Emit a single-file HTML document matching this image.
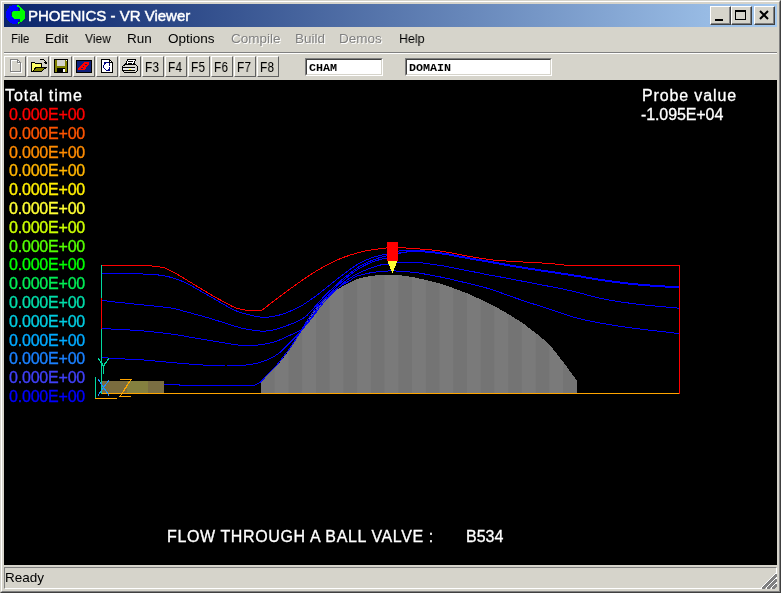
<!DOCTYPE html>
<html>
<head>
<meta charset="utf-8">
<title>PHOENICS - VR Viewer</title>
<style>
html,body{margin:0;padding:0;}
body{width:781px;height:593px;overflow:hidden;background:#d6d4cb;font-family:"Liberation Sans",sans-serif;position:relative;}
.abs{position:absolute;}
#frame{position:absolute;left:0;top:0;width:781px;height:593px;box-sizing:border-box;
  border-top:1px solid #d6d4cb;border-left:1px solid #d6d4cb;border-right:1px solid #404040;border-bottom:1px solid #404040;}
#frame2{position:absolute;left:1px;top:1px;width:779px;height:591px;box-sizing:border-box;
  border-top:1px solid #fff;border-left:1px solid #fff;border-right:1px solid #808080;border-bottom:1px solid #808080;}
#title{position:absolute;left:4px;top:4px;width:773px;height:23px;background:linear-gradient(to right,#0a246a 0%,#a6caf0 100%);}
#ttext{position:absolute;left:28px;top:7px;-webkit-text-stroke:0.45px #fff;color:#fff;font-size:15px;line-height:18px;white-space:nowrap;letter-spacing:0px;}
.tbtn{position:absolute;top:6px;height:19px;width:21px;box-sizing:border-box;background:#d6d4cb;
  border-top:1px solid #fff;border-left:1px solid #fff;border-right:1px solid #404040;border-bottom:1px solid #404040;}
.tbtn:after{content:"";position:absolute;left:0;top:0;right:0;bottom:0;border-right:1px solid #808080;border-bottom:1px solid #808080;}
.menu{position:absolute;top:30px;font-size:13.5px;line-height:18px;color:#000;white-space:nowrap;}
.menu.dis{color:#808080;text-shadow:1px 1px 0 #fff;}
.menu{transform-origin:0 0;will-change:transform;}
#ttext,#ready,.inp span{will-change:transform;}
#sep1{position:absolute;left:4px;top:52px;width:773px;height:1px;background:#808080;}
#sep2{position:absolute;left:4px;top:53px;width:773px;height:1px;background:#fff;}
.tb{position:absolute;top:56px;width:22px;height:21px;box-sizing:border-box;background:#d6d4cb;
  border-top:1px solid #fff;border-left:1px solid #fff;border-right:1px solid #606060;border-bottom:1px solid #606060;}
.tb span{position:absolute;left:-1.3px;top:2px;font-size:14px;line-height:16px;width:20px;text-align:center;color:#000;transform:scaleX(0.84);will-change:transform;}
.inp{position:absolute;top:58px;height:18px;box-sizing:border-box;background:#fff;
  border-top:1px solid #808080;border-left:1px solid #808080;border-right:1px solid #fff;border-bottom:1px solid #fff;}
.inp:after{content:"";position:absolute;left:0;top:0;right:0;bottom:0;border-top:1px solid #404040;border-left:1px solid #404040;border-right:1px solid #d6d4cb;border-bottom:1px solid #d6d4cb;}
.inp span{position:absolute;left:3px;top:3px;font-family:"Liberation Mono",monospace;font-weight:bold;font-size:11.7px;line-height:12px;color:#000;z-index:2;}
#canvas{position:absolute;left:4px;top:80px;width:773px;height:485px;background:#000;}
.leg{position:absolute;left:8.5px;font-size:16px;line-height:19px;white-space:nowrap;letter-spacing:-0.2px;-webkit-text-stroke:0.35px currentColor;will-change:transform;}
.wt{position:absolute;color:#fff;font-size:16px;line-height:19px;white-space:nowrap;-webkit-text-stroke:0.3px #fff;will-change:transform;}
#status{position:absolute;left:4px;top:567px;width:773px;height:22px;box-sizing:border-box;
  border-top:1px solid #808080;border-left:1px solid #808080;border-right:1px solid #fff;border-bottom:1px solid #fff;}
#ready{position:absolute;left:5.3px;top:569px;font-size:13.5px;line-height:18px;color:#000;}
</style>
</head>
<body>
<div id="frame"></div><div id="frame2"></div>
<div id="title"></div>
<svg id="icon" class="abs" style="left:0;top:0" width="32" height="30" viewBox="0 0 32 30" shape-rendering="crispEdges">
  <path d="M9.5,6.5 L13,5 L17,5 L18.5,6.5 L18.5,10.5 L14,11 L12,12.5 L12,17 L14,19 L19.5,19 L19.5,21 L17,24 L13,24 L9,22 L6.5,18 L6,15 L6,12 L7.5,8.5 Z" fill="#0000ff"/>
  <path d="M16.5,5 L19,5.5 L22.5,8.5 L25,12 L25,18 L21,22 L18.5,24 L17.5,24 L17.5,22.5 L19.5,21.5 L19.5,19 L14,19 L12,17 L12,12.5 L14,11 L19.5,10.5 L19.5,8 L17.5,7 Z" fill="#00ff00"/>
  <rect x="10.5" y="11" width="1.5" height="5" fill="#0a246a"/>
  <rect x="18" y="8" width="1.5" height="2.5" fill="#0a246a"/>
  <rect x="18" y="19.5" width="1.5" height="2" fill="#0a246a"/>
</svg>
<div id="ttext">PHOENICS - VR Viewer</div>
<div class="tbtn" style="left:710px"><svg class="abs" style="left:0;top:0" width="19" height="17"><rect x="4" y="12" width="8" height="2" fill="#000"/></svg></div>
<div class="tbtn" style="left:731px"><svg class="abs" style="left:0;top:0" width="19" height="17"><rect x="3.5" y="3.5" width="10" height="9" fill="none" stroke="#000"/><rect x="3" y="3" width="11" height="2" fill="#000"/></svg></div>
<div class="tbtn" style="left:754px"><svg class="abs" style="left:0;top:0" width="19" height="17"><path d="M5,4 L13,12 M13,4 L5,12" stroke="#000" stroke-width="2" fill="none"/></svg></div>

<div class="menu" id="m1" style="left:11px;transform:scaleX(0.84)">File</div>
<div class="menu" id="m2" style="left:45px">Edit</div>
<div class="menu" id="m3" style="left:85px;transform:scaleX(0.89)">View</div>
<div class="menu" id="m4" style="left:127px">Run</div>
<div class="menu" id="m5" style="left:168px">Options</div>
<div class="menu dis" id="m6" style="left:231px">Compile</div>
<div class="menu dis" id="m7" style="left:295px">Build</div>
<div class="menu dis" id="m8" style="left:339px">Demos</div>
<div class="menu" id="m9" style="left:398.5px;transform:scaleX(0.92)">Help</div>
<div id="sep1"></div><div id="sep2"></div>

<div class="tb" style="left:4px"></div>
<div class="tb" style="left:27px"></div>
<div class="tb" style="left:50px"></div>
<div class="tb" style="left:73px"></div>
<div class="tb" style="left:96px"></div>
<div class="tb" style="left:119px"></div>
<div class="tb" style="left:142px"><span>F3</span></div>
<div class="tb" style="left:165px"><span>F4</span></div>
<div class="tb" style="left:188px"><span>F5</span></div>
<div class="tb" style="left:211px"><span>F6</span></div>
<div class="tb" style="left:234px"><span>F7</span></div>
<div class="tb" style="left:257px"><span>F8</span></div>
<svg id="tbicons" class="abs" style="left:0;top:0" width="150" height="80" viewBox="0 0 150 80" shape-rendering="crispEdges" fill="none">
  <!-- new (disabled, embossed) -->
  <path d="M11.5,60.5 H18.5 L21.5,63.5 V72.5 H11.5 Z M18.5,60.5 V63.5 H21.5" stroke="#fff" stroke-width="1"/>
  <path d="M10.5,59.5 H17.5 L20.5,62.5 V71.5 H10.5 Z M17.5,59.5 V62.5 H20.5" stroke="#808080" stroke-width="1"/>
  <!-- open -->
  <path d="M32,63 H35 L36,64 H41 V67 H37 L33,71 H32 Z" fill="#ffff66"/>
  <path d="M31.5,71.5 V62.5 H34.5 L35.5,63.5 H41.5 V66.5" stroke="#000" stroke-width="1"/>
  <path d="M32.5,71.5 L36.5,67 H46.5 L41.5,71.5 Z" fill="#808000" stroke="#000" stroke-width="1"/>
  <path d="M39.5,60.5 L40.5,59.5 H43.5 L45.5,61.5 V63.5 M43.5,62.5 H46.5 M44.5,63.5 H46.5" stroke="#000" stroke-width="1"/>
  <!-- save -->
  <rect x="54" y="59" width="14" height="14" fill="#000"/>
  <rect x="55" y="60" width="2" height="12" fill="#808000"/>
  <rect x="65" y="60" width="2" height="12" fill="#808000"/>
  <rect x="55" y="66" width="12" height="2" fill="#808000"/>
  <rect x="57" y="60" width="8" height="6" fill="#d6d4cb"/>
  <rect x="63" y="69" width="2" height="3" fill="#fff"/>
  <rect x="66" y="60" width="1" height="1" fill="#fff"/>
  <!-- red box on navy -->
  <rect x="76" y="60" width="16" height="13" fill="#000"/>
  <rect x="77" y="61" width="14" height="11" fill="#10207a"/>
  <path d="M78,68 L84,62.5 L89,62 L89,64.5 L84,70.5 L78.5,70 Z" fill="#ff0000"/>
  <rect x="81" y="68" width="2" height="1" fill="#10207a"/><rect x="85" y="64" width="2" height="1" fill="#10207a"/><rect x="83" y="66" width="1" height="1" fill="#10207a"/>
  <!-- refresh page -->
  <path d="M101.5,59.5 H109.5 L112.5,62.5 V72.5 H101.5 Z" fill="#fff" stroke="#000" stroke-width="1"/>
  <path d="M109.5,59.5 V62.5 H112.5" stroke="#000" stroke-width="1"/>
  <rect x="104" y="62" width="5" height="1" fill="#000080"/><rect x="104" y="63" width="2" height="1" fill="#000080"/><rect x="109" y="63" width="1" height="1" fill="#000080"/><rect x="104" y="64" width="1" height="1" fill="#000080"/><rect x="109" y="64" width="1" height="2" fill="#000080"/><rect x="109" y="67" width="1" height="1" fill="#000080"/><rect x="103" y="65" width="1" height="3" fill="#000080"/><rect x="104" y="68" width="1" height="1" fill="#000080"/><rect x="105" y="69" width="1" height="1" fill="#000080"/><rect x="106" y="70" width="4" height="1" fill="#000080"/><rect x="108" y="69" width="2" height="1" fill="#000080"/><rect x="109" y="68" width="1" height="1" fill="#000080"/>
  <!-- printer -->
  <path d="M125.5,65 L127.5,59.5 H135.5 L133.5,65 Z" fill="#fff" stroke="#000" stroke-width="1"/>
  <path d="M128,61.5 H133 M127.5,63.5 H132" stroke="#000" stroke-width="1"/>
  <path d="M122.5,66.5 L125,64.5 H135.5 L137.5,66.5 V70.5 L135.5,72.5 H124.5 L122.5,70.5 Z" fill="#d6d4cb" stroke="#000" stroke-width="1"/>
  <path d="M123,67.5 H135 M123,70.5 H135" stroke="#000" stroke-width="1"/>
  <rect x="123" y="68" width="12" height="2" fill="#e8e8e8"/>
  <rect x="129" y="69" width="2" height="1" fill="#ffff00"/>
</svg>
<div class="inp" style="left:305px;width:78px"><span>CHAM</span></div>
<div class="inp" style="left:405px;width:147px"><span>DOMAIN</span></div>

<div id="canvas"></div>
<div class="wt" id="tt" style="left:5px;top:86px;letter-spacing:0.93px">Total time</div>
<div class="wt" id="pv" style="left:642px;top:86px;letter-spacing:0.87px">Probe value</div>
<div class="wt" id="pv2" style="left:641px;top:105px;letter-spacing:-0.1px">-1.095E+04</div>
<div class="wt" id="ftxt" style="left:167px;top:527px;letter-spacing:0.62px">FLOW THROUGH A BALL VALVE :</div>
<div class="wt" id="b534" style="left:466px;top:527px">B534</div>

<!--GEN-->
<div class="leg" id="l0" style="top:105px;color:#ff0000">0.000E+00</div>
<div class="leg" id="l1" style="top:124px;color:#ff5500">0.000E+00</div>
<div class="leg" id="l2" style="top:143px;color:#ff8c00">0.000E+00</div>
<div class="leg" id="l3" style="top:161px;color:#ffb400">0.000E+00</div>
<div class="leg" id="l4" style="top:180px;color:#ffee00">0.000E+00</div>
<div class="leg" id="l5" style="top:199px;color:#ffff33">0.000E+00</div>
<div class="leg" id="l6" style="top:218px;color:#ccff00">0.000E+00</div>
<div class="leg" id="l7" style="top:237px;color:#55ff00">0.000E+00</div>
<div class="leg" id="l8" style="top:255px;color:#00ff00">0.000E+00</div>
<div class="leg" id="l9" style="top:274px;color:#00ee55">0.000E+00</div>
<div class="leg" id="l10" style="top:293px;color:#00ddaa">0.000E+00</div>
<div class="leg" id="l11" style="top:312px;color:#00cce0">0.000E+00</div>
<div class="leg" id="l12" style="top:331px;color:#00aaff">0.000E+00</div>
<div class="leg" id="l13" style="top:349px;color:#1a80ff">0.000E+00</div>
<div class="leg" id="l14" style="top:368px;color:#4040f8">0.000E+00</div>
<div class="leg" id="l15" style="top:387px;color:#0000ff">0.000E+00</div>
<svg id="plot" class="abs" style="left:0;top:0" width="781" height="593" viewBox="0 0 781 593" shape-rendering="crispEdges" fill="none">
<defs><pattern id="stripes" patternUnits="userSpaceOnUse" x="261" y="0" width="27.46" height="8"><rect x="0" y="0" width="13.73" height="8" fill="#747474"/><rect x="13.73" y="0" width="13.73" height="8" fill="#7a7a7a"/></pattern></defs>
<path d="M261,393.5 L261,381 L268,374.5 L275.5,367.4 L282,359.5 L289,350.4 L296,340 L302.8,328.7 L309.5,318 L316.5,308.2 L323,301 L330,294.6 L337,289.7 L343.8,285.5 L350.5,282 L357.4,279 L364,277.2 L371,276 L378,275.2 L384.8,274.8 L392,274.7 L398.5,275 L412.2,277 L426,279.9 L439.7,283.5 L453.4,288.1 L467.2,293.3 L480.9,299.5 L494.6,306.2 L508.3,314 L522,322.6 L535.8,333 L549.5,344.5 L563.2,362 L577,380.7 L577,393.5 Z" fill="url(#stripes)"/>
<rect x="102" y="381" width="25" height="12" fill="#7a6c3e"/><rect x="127" y="381" width="21" height="12" fill="#84803f"/><rect x="148" y="381" width="16" height="12" fill="#7a6e42"/>
<path d="M101,393.5 L680,393.5" stroke="#ffa500" stroke-width="1.3"/>
<path d="M102,273.5 C107.2,273.5 125.0,273.3 133,273.5 C141.0,273.7 145.0,274.2 150,274.5 C155.0,274.8 159.2,274.9 163,275.5 C166.8,276.1 169.5,276.9 173,278 C176.5,279.1 180.0,280.2 184,282 C188.0,283.8 192.5,286.5 197,289 C201.5,291.5 205.5,293.8 211,297 C216.5,300.2 225.2,305.4 230,308 C234.8,310.6 235.8,310.9 240,312.3 C244.2,313.7 251.0,315.4 255,316.2 C259.0,317.0 261.2,317.3 264,317.4 C266.8,317.5 269.0,317.1 272,316.6 C275.0,316.1 278.9,315.3 281.9,314.4 C284.9,313.5 287.0,312.5 290,311.2 C293.0,309.9 296.8,308.3 299.8,306.7 C302.8,305.1 305.0,303.5 308,301.5 C311.0,299.5 314.7,296.9 317.7,294.7 C320.7,292.4 323.0,290.4 326,288 C329.0,285.6 332.6,282.7 335.6,280.3 C338.6,277.9 341.0,276.0 344,273.8 C347.0,271.6 350.6,268.9 353.6,266.9 C356.6,264.9 359.0,263.5 362,262 C365.0,260.5 368.5,259.0 371.5,257.9 C374.5,256.8 377.4,256.1 380,255.5 C382.6,254.8 384.3,254.7 387.3,254 C390.3,253.3 394.6,251.7 398,251.1 C401.4,250.5 405.0,250.6 408,250.5 C411.0,250.4 412.1,250.2 416,250.4 C419.9,250.6 426.4,251.1 431.5,251.6 C436.6,252.1 441.7,252.9 446.8,253.7 C451.9,254.5 456.9,255.6 462,256.5 C467.1,257.4 472.9,258.5 477.6,259.3 C482.3,260.1 486.3,260.8 490,261.4 C493.7,262.0 495.0,262.3 500,263.2 C505.0,264.1 513.3,265.6 520,266.7 C526.7,267.8 533.3,268.8 540,269.8 C546.7,270.8 553.3,271.8 560,272.8 C566.7,273.8 573.3,274.8 580,275.9 C586.7,277.0 593.3,278.3 600,279.3 C606.7,280.3 614.2,281.3 620,282 C625.8,282.7 629.6,283.2 634.6,283.7 C639.6,284.2 645.2,284.6 650,285 C654.8,285.4 658.5,285.6 663.3,285.9 C668.1,286.2 676.4,286.5 679,286.6" stroke="#0000ff" stroke-width="1"/>
<path d="M102,300.5 C105.0,300.8 113.0,301.8 120,302.5 C127.0,303.2 135.5,304.1 144,305 C152.5,305.9 164.2,306.9 171,308 C177.8,309.1 180.5,310.3 185,311.5 C189.5,312.7 193.5,313.8 198,315 C202.5,316.2 207.5,317.7 212,319 C216.5,320.3 220.3,321.6 225,323 C229.7,324.4 235.5,326.5 240,327.7 C244.5,328.9 247.9,329.4 252,330 C256.1,330.6 260.5,331.3 264.3,331.2 C268.1,331.1 270.3,330.8 274.7,329.6 C279.1,328.4 286.9,325.6 290.8,324.2 C294.7,322.8 295.6,322.2 298,321 C300.4,319.8 303.0,318.7 305.2,317 C307.4,315.3 308.9,313.2 311,311 C313.1,308.8 315.2,306.4 317.7,303.6 C320.2,300.9 323.0,297.5 326,294.5 C329.0,291.5 332.6,288.4 335.6,285.7 C338.6,282.9 341.0,280.5 344,278 C347.0,275.5 350.6,272.7 353.6,270.5 C356.6,268.3 359.0,266.6 362,265 C365.0,263.4 368.5,261.9 371.5,260.6 C374.5,259.4 377.4,258.3 380,257.5 C382.6,256.7 384.3,256.5 387.3,255.8 C390.3,255.1 394.6,253.8 398,253.1 C401.4,252.4 405.0,252.2 408,251.8 C411.0,251.4 412.1,250.9 416,250.9 C419.9,250.9 426.4,251.6 431.5,252.1 C436.6,252.6 441.7,253.4 446.8,254.2 C451.9,255.0 456.9,256.1 462,257.0 C467.1,257.9 472.9,259.0 477.6,259.8 C482.3,260.6 486.3,261.2 490,261.9 C493.7,262.5 495.0,262.8 500,263.7 C505.0,264.6 513.3,266.1 520,267.2 C526.7,268.3 533.3,269.3 540,270.3 C546.7,271.3 553.3,272.3 560,273.3 C566.7,274.3 573.3,275.3 580,276.4 C586.7,277.5 593.3,278.8 600,279.8 C606.7,280.8 614.2,281.8 620,282.5 C625.8,283.2 629.6,283.7 634.6,284.2 C639.6,284.7 645.2,285.1 650,285.5 C654.8,285.9 658.5,286.1 663.3,286.4 C668.1,286.7 676.4,287.0 679,287.1" stroke="#0000ff" stroke-width="1"/>
<path d="M102,328.5 C105.0,328.7 113.0,329.1 120,329.5 C127.0,329.9 135.5,330.2 144,331 C152.5,331.8 162.0,332.8 171,334 C180.0,335.2 189.0,337.0 198,338.5 C207.0,340.0 218.0,341.9 225,343 C232.0,344.1 234.8,344.8 240,345.2 C245.2,345.6 252.0,345.4 256,345.2 C260.0,345.0 261.3,344.6 264,344.2 C266.7,343.8 269.7,343.2 272.4,342.5 C275.1,341.8 277.3,340.9 280,339.8 C282.7,338.7 286.1,336.9 288.6,335.8 C291.1,334.7 292.8,334.0 295,333 C297.2,332.0 299.4,331.4 301.6,329.6 C303.8,327.8 305.9,324.7 308,322 C310.1,319.3 312.0,316.3 314,313.5 C316.0,310.7 317.9,307.8 320,305 C322.1,302.2 324.2,299.3 326.7,296.5 C329.2,293.7 332.0,290.9 335,288 C338.0,285.1 341.6,282.0 344.6,279.4 C347.6,276.8 350.0,274.6 353,272.5 C356.0,270.4 359.5,268.2 362.5,266.5 C365.5,264.8 368.0,263.7 371,262.5 C374.0,261.3 377.8,260.2 380.5,259.4 C383.2,258.6 384.4,258.9 387.3,257.9 C390.2,256.9 394.6,254.6 398,253.6 C401.4,252.6 405.0,252.3 408,251.9 C411.0,251.5 412.1,251.3 416,251.4 C419.9,251.5 426.4,252.1 431.5,252.6 C436.6,253.1 441.7,253.9 446.8,254.7 C451.9,255.5 456.9,256.6 462,257.5 C467.1,258.4 472.9,259.5 477.6,260.3 C482.3,261.1 486.3,261.8 490,262.4 C493.7,263.0 495.0,263.3 500,264.2 C505.0,265.1 513.3,266.6 520,267.7 C526.7,268.8 533.3,269.8 540,270.8 C546.7,271.8 553.3,272.8 560,273.8 C566.7,274.8 573.3,275.8 580,276.9 C586.7,278.0 593.3,279.3 600,280.3 C606.7,281.3 614.2,282.3 620,283.0 C625.8,283.7 629.6,284.2 634.6,284.7 C639.6,285.2 645.2,285.6 650,286.0 C654.8,286.4 658.5,286.6 663.3,286.9 C668.1,287.2 676.4,287.5 679,287.6" stroke="#0000ff" stroke-width="1"/>
<path d="M102,357.5 C103.0,357.6 104.2,357.8 108,358 C111.8,358.2 119.0,358.7 125,359 C131.0,359.3 136.3,359.4 144,360 C151.7,360.6 162.0,361.7 171,362.5 C180.0,363.3 189.0,364.1 198,364.7 C207.0,365.3 218.0,365.9 225,366 C232.0,366.1 235.2,365.8 240,365.5 C244.8,365.2 250.2,364.5 253.5,364 C256.8,363.5 257.8,363.0 260,362.3 C262.2,361.6 264.7,361.0 267,360 C269.3,359.0 271.8,357.8 274,356.5 C276.2,355.2 278.3,353.8 280.5,352 C282.7,350.2 284.8,347.8 287,345.5 C289.2,343.2 291.8,340.7 294,338.5 C296.2,336.3 298.1,334.6 300,332.5 C301.9,330.4 302.9,328.9 305.2,326 C307.5,323.1 311.5,318.5 314,315.3 C316.5,312.1 317.9,309.7 320,307 C322.1,304.3 324.1,301.8 326.7,299 C329.3,296.2 332.6,293.0 335.6,290.2 C338.6,287.4 341.6,284.4 344.6,282 C347.6,279.6 350.6,277.6 353.6,275.8 C356.6,274.0 359.5,272.7 362.5,271.4 C365.5,270.1 368.5,268.9 371.5,267.8 C374.5,266.7 377.9,265.6 380.5,265 C383.1,264.4 384.4,264.6 387.3,264.2 C390.2,263.8 393.2,263.0 398,262.7 C402.8,262.4 410.4,262.1 416,262.4 C421.6,262.6 426.4,263.5 431.5,264.2 C436.6,264.9 441.7,265.6 446.8,266.5 C451.9,267.4 456.9,268.6 462,269.6 C467.1,270.6 472.9,271.7 477.6,272.6 C482.3,273.5 486.3,274.5 490,275.2 C493.7,275.9 495.0,276.0 500,276.9 C505.0,277.8 513.3,279.4 520,280.7 C526.7,282.0 533.3,283.3 540,284.6 C546.7,285.9 553.3,287.0 560,288.4 C566.7,289.8 574.8,291.7 580,293 C585.2,294.3 586.7,294.9 591,296 C595.3,297.1 601.2,298.5 606,299.5 C610.8,300.5 615.2,301.1 620,301.8 C624.8,302.5 629.6,303.2 634.6,303.8 C639.6,304.4 645.2,305.0 650,305.5 C654.8,306.0 658.5,306.4 663.3,306.8 C668.1,307.2 676.4,308.0 679,308.2" stroke="#0000ff" stroke-width="1"/>
<path d="M164,384.5 L179,384.5 L179,385.5 L253.5,385.5 L257,384 L261,381.7" stroke="#0000ff" stroke-width="1"/>
<path d="M261,381.7 C262.2,380.4 265.6,376.5 268,374 C270.4,371.5 273.2,369.1 275.5,366.5 C277.8,363.9 279.8,361.4 282,358.5 C284.2,355.6 286.7,352.6 289,349.4 C291.3,346.1 293.7,342.6 296,339 C298.3,335.4 300.6,331.4 302.8,327.7 C305.1,324.0 307.2,320.4 309.5,317 C311.8,313.6 314.2,310.0 316.5,307.2 C318.8,304.4 320.8,302.3 323,300 C325.2,297.7 327.7,295.5 330,293.6 C332.3,291.7 334.7,290.1 337,288.5 C339.3,286.9 341.6,285.4 343.8,284 C346.1,282.6 348.6,281.5 350.5,280.3 C352.4,279.1 352.8,277.8 355.4,276.7 C358.0,275.6 362.4,274.5 366,273.7 C369.6,272.9 373.1,272.3 376.9,271.9 C380.6,271.4 385.0,271.1 388.5,271 C392.0,270.9 393.4,270.8 398,271.1 C402.6,271.4 410.4,271.9 416,272.6 C421.6,273.3 426.4,274.4 431.5,275.3 C436.6,276.2 441.7,277.2 446.8,278.3 C451.9,279.4 456.9,280.7 462,281.9 C467.1,283.1 472.9,284.5 477.6,285.7 C482.3,286.9 486.3,287.9 490,289 C493.7,290.1 495.5,290.9 500,292.5 C504.5,294.1 512.0,296.8 517,298.5 C522.0,300.2 524.7,301.2 530,302.9 C535.3,304.6 543.2,307.0 548.7,308.8 C554.2,310.6 558.2,312.2 563,313.8 C567.8,315.4 572.6,316.9 577.3,318.2 C582.0,319.4 586.2,320.3 591,321.3 C595.8,322.3 601.2,323.2 606,324 C610.8,324.8 615.2,325.6 620,326.3 C624.8,327.0 629.6,327.7 634.6,328.3 C639.6,328.9 645.2,329.6 650,330.2 C654.8,330.8 658.5,331.1 663.3,331.7 C668.1,332.3 676.4,333.4 679,333.7" stroke="#0000ff" stroke-width="1"/>
<path d="M101.5,265 L101.5,394" stroke="#00d8a0" stroke-width="1.3"/>
<path d="M101.5,298 L101.5,329" stroke="#ff0000" stroke-width="1.3"/>
<path d="M101.5,265.5 L148,265.5 L156,266.5 L164,267.5" stroke="#ff0000" stroke-width="1"/>
<path d="M164,267.5 C165.8,268.4 170.7,270.6 175,273 C179.3,275.4 184.3,278.6 190,282 C195.7,285.4 203.2,290.1 209,293.5 C214.8,296.9 220.5,300.1 225,302.5 C229.5,304.9 232.7,306.8 236,308 C239.3,309.2 242.7,309.6 245,310 C247.3,310.4 247.2,310.4 250,310.5 C252.8,310.6 259.6,310.5 261.5,310.5" stroke="#ff0000" stroke-width="1"/>
<path d="M261.5,310.5 C263.4,309.1 268.0,305.5 272.9,301.8 C277.8,298.1 284.8,292.7 290.8,288.4 C296.8,284.1 302.8,279.7 308.8,275.8 C314.8,271.9 320.7,268.2 326.7,265.1 C332.7,262.0 338.6,259.2 344.6,257 C350.6,254.8 356.5,253.0 362.5,251.6 C368.5,250.2 376.4,249.2 380.5,248.6 C384.6,248.0 384.4,248.1 387.3,247.9 C390.2,247.7 394.9,247.4 398,247.4 C401.1,247.4 402.3,247.7 406,248 C409.7,248.3 415.7,248.7 420,249 C424.3,249.3 428.6,249.7 432,250 C435.4,250.3 437.4,250.6 440.7,251.1 C444.0,251.6 448.4,252.3 452,253 C455.6,253.7 458.0,254.2 462,255 C466.0,255.8 471.7,256.8 476,257.5 C480.3,258.2 484.7,258.8 488,259.3 C491.3,259.8 491.7,259.9 496,260.3 C500.3,260.7 507.8,261.1 514,261.5 C520.2,261.9 527.0,262.2 533,262.5 C539.0,262.8 545.7,263.2 550,263.5 C554.3,263.8 555.8,264.2 559,264.5 C562.2,264.8 567.3,265.3 569,265.5" stroke="#ff0000" stroke-width="1"/>
<path d="M569,265.5 L679.5,265.5 L679.5,393.5" stroke="#ff0000" stroke-width="1"/>
<rect x="387" y="242" width="11" height="19" fill="#ff0000"/>
<path d="M387.5,261 L397.5,261 L392.5,273.5 Z" fill="#ffff33"/>
<path d="M98,358 L103.5,366 L109,358 M103.5,366 L103.5,374" stroke="#00d8a0" stroke-width="1.2"/>
<path d="M98,379 L109,395.5 M109,380 L98,395.5" stroke="#1e90ff" stroke-width="1"/>
<path d="M120,379.5 L131,379.5 L120,396.5 L131,396.5" stroke="#ffa500" stroke-width="1.2"/>
<path d="M95.5,377 L95.5,398.5" stroke="#00d8a0" stroke-width="1.2"/>
<path d="M95,398.5 L117,398.5" stroke="#ffa500" stroke-width="1.2"/>
</svg>
<!--/GEN-->
<div id="status"></div>
<div id="ready">Ready</div>
<svg id="grip" class="abs" style="left:760px;top:572px" width="17" height="17" viewBox="0 0 17 17" shape-rendering="crispEdges">
  <rect x="1" y="15" width="16" height="2" fill="#d6d4cb"/>
  <path d="M1,16.5 L16.5,1 M6,16.5 L16.5,6 M11,16.5 L16.5,11" stroke="#fff" stroke-width="1" fill="none"/>
  <path d="M2,16.5 L16.5,2 M3,16.5 L16.5,3 M4,16.5 L16.5,4 M7,16.5 L16.5,7 M8,16.5 L16.5,8 M9,16.5 L16.5,9 M12,16.5 L16.5,12 M13,16.5 L16.5,13 M14,16.5 L16.5,14" stroke="#808080" stroke-width="1" fill="none"/>
</svg>
</body>
</html>
